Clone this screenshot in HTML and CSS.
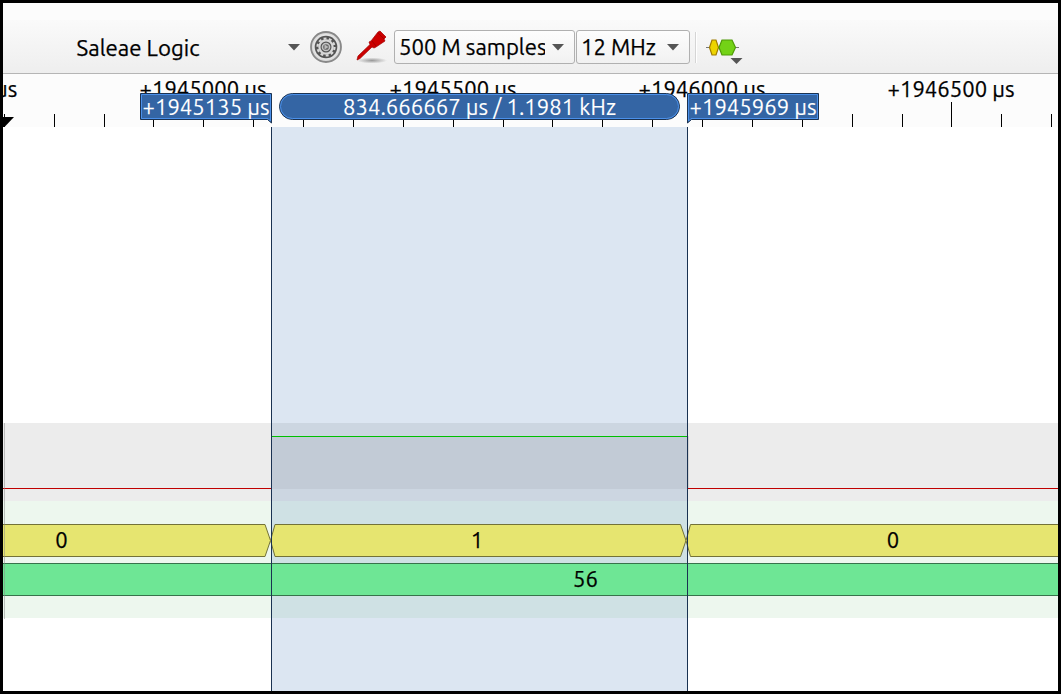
FILE: index.html
```html
<!DOCTYPE html>
<html lang="en">
<head>
<meta charset="utf-8">
<title>Saleae Logic</title>
<link rel="stylesheet" href="styles.css">
</head>
<body>
<main class="window">
  <header class="toolbar">
    <div class="device"><svg class="label" width="124" height="34"><text x="-0.500" y="26" textLength="123" lengthAdjust="spacingAndGlyphs">Saleae Logic</text></svg><svg class="arrow" width="12" height="7"><path d="M0 0H12L6 6.5Z"/></svg></div>
    <svg class="gear" width="32" height="32" viewBox="0 0 32 32">
      <circle cx="16" cy="16" r="15" fill="#d9d9d9" stroke="#888" stroke-width="1.8"/>
      <circle cx="16" cy="16" r="12.9" fill="#e4e4e4"/>
      <circle cx="16" cy="16" r="11.3" fill="#555"/>
      <circle cx="16" cy="16" r="8.5" fill="none" stroke="#d9d9d9" stroke-width="2.2" stroke-dasharray="2.9 2.44"/>
      <circle cx="16" cy="16" r="6.600" fill="none" stroke="#d9d9d9" stroke-width="2.2"/>
      <circle cx="16" cy="16" r="3.6" fill="#666" stroke="#c4c4c4" stroke-width="1.5"/>
      <path d="M14.5 13.5L18.5 16L14.5 18.5Z" fill="#bbb"/>
    </svg>
    <svg class="probe" width="32" height="34" viewBox="0 0 32 34">
      <defs><radialGradient id="shade"><stop offset="0" stop-color="#999"/><stop offset="1" stop-color="#999" stop-opacity="0"/></radialGradient></defs>
      <ellipse cx="16" cy="30.5" rx="15" ry="3" fill="url(#shade)"/>
      <path d="M1 30L2 26L14 14.5L13 12L15 11L22 2L24 1L26 3L30 7L28 9L29 11L20 17L18 18L16 17L4 28.500Z" fill="#c00" stroke="#a00000" stroke-width=".7"/>
      <path d="M16 11L20 16M22 3L28 9" stroke="#900" stroke-width=".8"/>
    </svg>
    <div class="combo samples"><svg class="label" width="145" height="32"><text x="-1" y="24" textLength="147.500" lengthAdjust="spacingAndGlyphs">500 M samples</text></svg><svg class="arrow" width="12" height="7"><path d="M0 0H12L6 6.500Z"/></svg></div>
    <div class="combo rate"><svg class="label" width="76" height="32"><text x="-1" y="24" textLength="75" lengthAdjust="spacingAndGlyphs">12 MHz</text></svg><svg class="arrow" width="12" height="7"><path d="M0 0H12L6 6.500Z"/></svg></div>
    <div class="separator"></div>
    <svg class="decoder" width="37" height="27" viewBox="0 0 37 27">
      <path d="M0 10.500H33" stroke="#777"/>
      <path d="M3.500 10.500L6 3H10L12.500 10.500L10 18H6Z" fill="#edd400" stroke="#a07c00" stroke-width="1.2"/>
      <path d="M13 10.500L16 3H26L29.500 10.500L26 18H16Z" fill="#73d216" stroke="#4e9a06" stroke-width="1.2"/>
      <path d="M24.500 21H36.500L30.500 27Z" fill="#555"/>
    </svg>
  </header>

  <svg class="ruler" width="1055" height="53" viewBox="3 74 1055 53">
    <g text-anchor="middle">
      <text x="-46" y="97" textLength="126.500">+1944500 µs</text>
      <text x="203" y="97" textLength="127">+1945000 µs</text>
      <text x="453" y="97" textLength="127">+1945500 µs</text>
      <text x="702" y="97" textLength="127">+1946000 µs</text>
      <text x="951" y="97" textLength="127">+1946500 µs</text>
    </g>
    <path class="tick" d="M4.500 114V127M54.500 114V127M104.500 114V127M153.500 114V127M203.500 102V127M253.500 114V127M303.500 114V127M353.500 114V127M403.500 114V127M453.500 102V127M503.500 114V127M552.500 114V127M602.500 114V127M652.500 114V127M702.500 102V127M752.500 114V127M802.500 114V127M852.500 114V127M902.500 114V127M951.500 102V127M1001.500 114V127M1051.500 114V127"/>
    <path d="M3 117H14L4.500 127H3Z"/>
    <path class="flag-edge" d="M140.500 93.500H271.500V123L267.500 119.500H140.500Z"/>
    <path class="flag-shine" d="M141.500 94.500H270.500V121L268 118.500H141.500Z"/>
    <path class="flag-edge" d="M687.500 93.500H818.500V119.500H691.500L687.500 123Z"/>
    <path class="flag-shine" d="M688.500 94.500H817.500V118.500H691L688.500 121Z"/>
    <rect class="flag-edge" x="279.500" y="93.500" width="400" height="26" rx="13"/>
    <rect class="flag-shine" x="280.500" y="94.500" width="398" height="24" rx="12"/>
    <g class="flag-text" text-anchor="middle">
      <text x="206" y="115" textLength="127">+1945135 µs</text>
      <text x="479.500" y="115" textLength="273">834.666667 µs / 1.1981 kHz</text>
      <text x="753" y="115" textLength="127">+1945969 µs</text>
    </g>
  </svg>

  <svg class="traces" width="1055" height="564" viewBox="3 127 1055 564">
    <rect class="selection" x="272" y="127" width="415" height="564"/>
    <rect x="3" y="423" width="1055" height="78" fill="#ececec"/>
    <rect x="3" y="501" width="1055" height="117" fill="#edf7ee"/>
    <rect x="272" y="423" width="415" height="78" fill="#ccd6e1"/>
    <rect x="272" y="437" width="416" height="52" fill="#c2cbd6"/>
    <rect x="272" y="501" width="415" height="117" fill="#cfe1e4"/>
    <path d="M688.500 436V488" stroke="#d4d4d4"/>
    <path d="M3 488.500H271M688 488.500H1058" stroke="#c00000"/>
    <path d="M272 436.500H687" stroke="#00c000"/>
    <g class="bit">
      <path d="M-5 524.500H265L270.500 540.500L265 556.500H-5Z"/>
      <path d="M270.500 540.500L275 524.500H680.500L686 540.500L680.500 556.500H275Z"/>
      <path d="M686 540.500L690.500 524.500H1065V556.500H690.500Z"/>
    </g>
    <rect class="byte" x="-5" y="563.500" width="1070" height="32"/>
    <path d="M4.500 423V619" stroke="#888" stroke-opacity=".5"/>
    <path class="cursor" d="M271.500 127V691M687.500 127V691"/>
    <g text-anchor="middle">
      <text x="61.500" y="548">0</text>
      <text x="477" y="548">1</text>
      <text x="893" y="548">0</text>
      <text x="585.500" y="587">56</text>
    </g>
  </svg>
</main>
</body>
</html>
```
FILE: styles.css
```css
* { box-sizing: border-box; }
body { margin: 0; overflow: hidden; }
svg { display: block; flex: none; }
text { font: 22px "Ubuntu", "Noto Sans", sans-serif; fill: #000; stroke: #000; stroke-width: .25px; }

.window {
  display: flex;
  flex-direction: column;
  width: 1061px;
  height: 694px;
  border: 3px solid #000;
  background: #fff;
}

.toolbar {
  display: flex;
  align-items: flex-start;
  flex: none;
  height: 71px;
  padding: 27px 0 0 74px;
  border-bottom: 1px solid #b5b5b5;
  background: linear-gradient(#fcfcfc 0 17px, #fafafa 17px, #eee 100%);
}
.arrow { fill: #555; }
.device { display: flex; align-items: center; justify-content: space-between; width: 223px; height: 34px; }
.device .label { overflow: visible; }
.gear { margin: 1px 0 0 10px; }
.probe { margin-left: 14px; }
.combo {
  display: flex;
  align-items: center;
  justify-content: space-between;
  height: 34px;
  padding: 0 10px 0 5px;
  border: 1px solid #b0b0b0;
  border-radius: 3px;
  background: linear-gradient(#fdfdfd, #f1f1f1);
}
.samples { width: 181px; margin-left: 6px; }
.rate { width: 114px; margin-left: 1px; }
.separator { width: 2px; height: 31px; margin: 2px 0 0 5px; background: #d5d5d5; border-right: 1px solid #fff; }
.decoder { margin: 7px 0 0 9px; }

.ruler { background: #fcfcfc; }
.tick { stroke: #000; }
.flag-edge { fill: #3465a4; stroke: #1a3252; }
.flag-shine { fill: #3465a4; stroke: #4a90ea; }
.flag-text text { fill: #fff; stroke: #fff; stroke-width: .1px; }

.selection { fill: #dce6f2; }
.bit { fill: #e6e570; stroke: #737238; }
.byte { fill: #6ee695; stroke: #37734b; }
.cursor { stroke: #1a3252; }
```
